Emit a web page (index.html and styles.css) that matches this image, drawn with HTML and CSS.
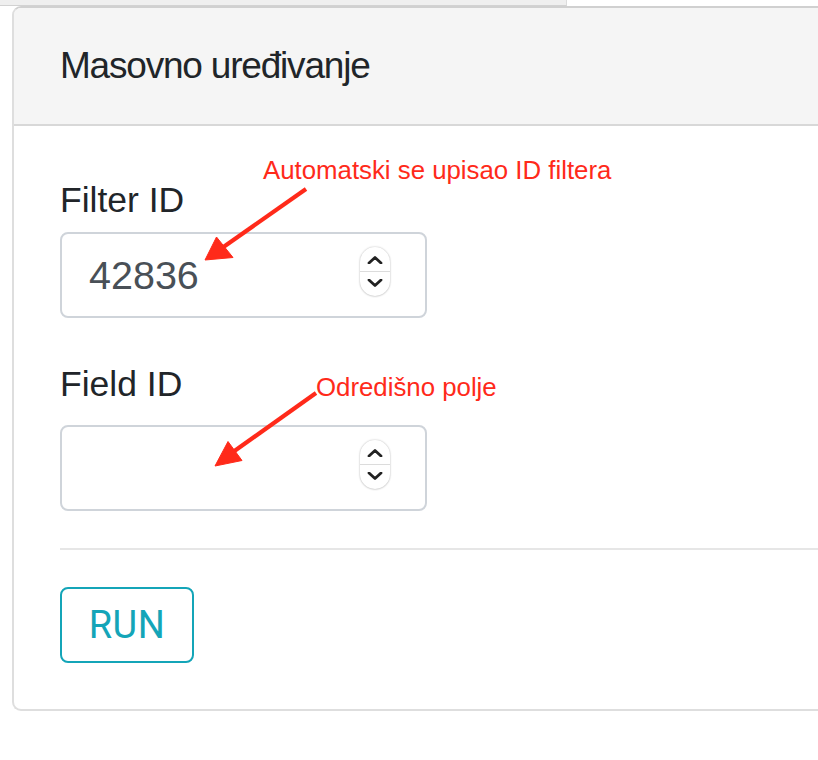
FILE: index.html
```html
<!DOCTYPE html>
<html lang="hr">
<head>
<meta charset="utf-8">
<title>Masovno uređivanje</title>
<link rel="stylesheet" href="styles.css">
</head>
<body>
<div class="page">
  <div class="tabstrip"></div>

  <section class="card">
    <header class="card-header">
      <h2 class="card-title">Masovno uređivanje</h2>
    </header>
    <div class="card-body">
      <div class="field field-filter">
        <label class="field-label" for="filter-id">Filter ID</label>
        <div class="num-input">
          <input id="filter-id" class="num-value" type="text" value="42836">
          <span class="spin">
            <span class="spin-btn">
              <svg viewBox="0 0 16 8" width="16" height="8"><path d="M2 7 L8 1.5 L14 7" fill="none" stroke="#222" stroke-width="2.8" stroke-linecap="round" stroke-linejoin="round"/></svg>
            </span>
            <span class="spin-btn">
              <svg viewBox="0 0 16 8" width="16" height="8"><path d="M2 1 L8 6.5 L14 1" fill="none" stroke="#222" stroke-width="2.8" stroke-linecap="round" stroke-linejoin="round"/></svg>
            </span>
          </span>
        </div>
      </div>

      <div class="field field-target">
        <label class="field-label" for="field-id">Field ID</label>
        <div class="num-input">
          <input id="field-id" class="num-value" type="text" value="">
          <span class="spin">
            <span class="spin-btn">
              <svg viewBox="0 0 16 8" width="16" height="8"><path d="M2 7 L8 1.5 L14 7" fill="none" stroke="#222" stroke-width="2.8" stroke-linecap="round" stroke-linejoin="round"/></svg>
            </span>
            <span class="spin-btn">
              <svg viewBox="0 0 16 8" width="16" height="8"><path d="M2 1 L8 6.5 L14 1" fill="none" stroke="#222" stroke-width="2.8" stroke-linecap="round" stroke-linejoin="round"/></svg>
            </span>
          </span>
        </div>
      </div>

      <hr class="divider">

      <button class="btn-run" type="button">RUN</button>
    </div>
  </section>

  <!-- callouts drawn on top of the form -->
  <span class="note note-filter">Automatski se upisao ID filtera</span>
  <span class="note note-field">Odredišno polje</span>
  <svg class="arrows" width="818" height="760" viewBox="0 0 818 760">
    <g fill="#ff2a1a" stroke="#ff2a1a">
      <line x1="306" y1="189" x2="222" y2="248" stroke-width="4.2"/>
      <polygon points="205,260 216.5,237 233,257.5" stroke-width="1" stroke-linejoin="round"/>
      <line x1="316" y1="393" x2="233" y2="452" stroke-width="4.2"/>
      <polygon points="215,466 228,441.5 242,460.5" stroke-width="1" stroke-linejoin="round"/>
    </g>
  </svg>
</div>
</body>
</html>
```

FILE: styles.css
```css
html, body {
  margin: 0;
  padding: 0;
  background: #fff;
}

body {
  width: 818px;
  height: 760px;
  overflow: hidden;
  font-family: "Liberation Sans", Arial, sans-serif;
  color: #212529;
}

.page {
  position: relative;
  width: 818px;
  height: 760px;
}

/* strip of the element above the card */
.tabstrip {
  width: 566px;
  height: 5px;
  background: #efefef;
  border-right: 1px solid #dcdcdc;
  border-bottom: 1px solid #d2d2d2;
}

/* the card continues past the right edge of the window */
.card {
  margin-left: 12px;
  border: 2px solid #dedede;
  border-right: 0;
  border-top-color: #d0d0d0;
  border-radius: 9px 0 0 9px;
  background: #fff;
  overflow: hidden;
}

.card-header {
  background: #f5f5f5;
  border-bottom: 2px solid #d8d8d8;
  padding: 38px 46px 38px;
}

.card-title {
  margin: 0;
  font-weight: 400;
  font-size: 37px;
  line-height: 40px;
  letter-spacing: -1.2px;
  color: #212529;
}

.card-body {
  padding: 53px 46px 46px;
}

.field {
  display: flex;
  flex-direction: column;
  align-items: flex-start;
}

.field-label {
  font-size: 35.5px;
  line-height: 42px;
  color: #212529;
}

.field-filter .field-label {
  margin-bottom: 11px;
}

.field-target {
  margin-top: 45px;
}

.field-target .field-label {
  margin-bottom: 20px;
}

.num-input {
  box-sizing: border-box;
  width: 367px;
  height: 86px;
  border: 2px solid #cfd4da;
  border-radius: 8px;
  display: flex;
  align-items: center;
  padding: 0 35px 0 27px;
  background: #fff;
}

.num-value {
  flex: 1;
  min-width: 0;
  height: 46px;
  border: 0;
  padding: 0;
  margin: 0;
  outline: none;
  background: transparent;
  font-family: "Liberation Sans", Arial, sans-serif;
  font-size: 39.5px;
  color: #495057;
}

.spin {
  align-self: flex-start;
  margin-top: 13px;
  width: 30px;
  height: 49px;
  border-radius: 15px;
  background: #fff;
  box-shadow: 0 0 2px rgba(0, 0, 0, 0.28), 0 1px 2px rgba(0, 0, 0, 0.08);
  display: flex;
  flex-direction: column;
  overflow: hidden;
}

.spin-btn {
  flex: 1;
  display: flex;
  align-items: center;
  justify-content: center;
}

.spin-btn:first-child {
  border-bottom: 1px solid #dcdcdc;
  padding-top: 2px;
}

.spin-btn:last-child {
  padding-bottom: 2px;
}

.spin-btn svg {
  display: block;
}

.divider {
  margin: 37px -46px 37px 0;
  border: 0;
  border-top: 2px solid #e6e6e6;
}

.btn-run {
  box-sizing: border-box;
  width: 134px;
  height: 76px;
  border: 2px solid #14a5b8;
  border-radius: 8px;
  background: #fff;
  color: #14a5b8;
  font-family: Roboto, "Liberation Sans", sans-serif;
  font-size: 38px;
  letter-spacing: 0.5px;
  padding: 0;
  display: block;
}

/* callout labels */
.note {
  position: absolute;
  font-family: "Liberation Sans", Arial, sans-serif;
  font-size: 25.8px;
  line-height: 30px;
  color: #ff2a1a;
  white-space: nowrap;
}

.note-filter {
  left: 263px;
  top: 155px;
}

.note-field {
  left: 316px;
  top: 372px;
}

.arrows {
  position: absolute;
  left: 0;
  top: 0;
  pointer-events: none;
}
```
